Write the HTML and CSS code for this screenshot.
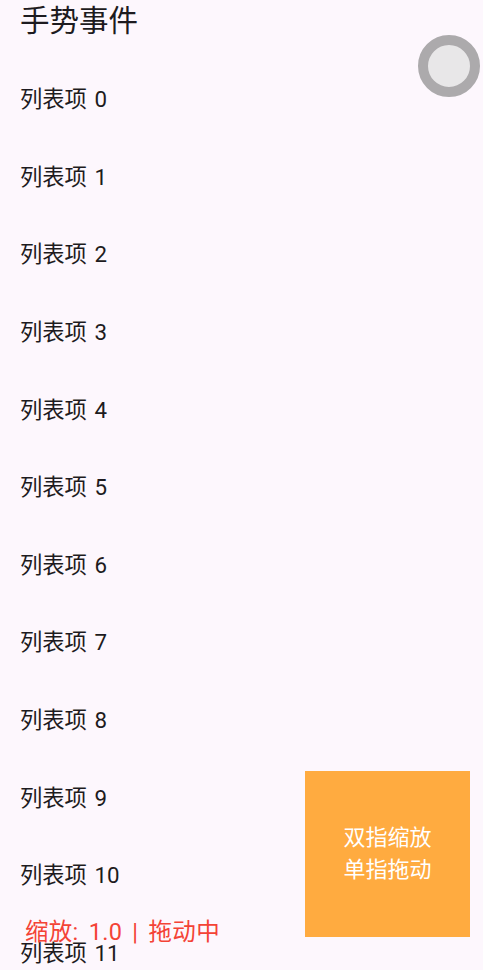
FILE: index.html
```html
<!DOCTYPE html>
<html>
<head>
    <meta charset="utf-8">
    <link rel="stylesheet" href="styles.css">
</head>
<body>
    <div class="page">
        <h1 class="title">手势事件</h1>
        <ul class="list" id="list"></ul>
    </div>

    <div class="knob"></div>

    <div class="gesture-box">
        <span>双指缩放</span>
        <span>单指拖动</span>
    </div>

    <div class="status">缩放: 1.0 | 拖动中</div>

    <script>
        // Build the list items
        const list = document.getElementById("list");
        for (let i = 0; i < 12; i++) {
            const item = document.createElement("li");
            item.className = "list-item";
            item.textContent = "列表项 " + i;
            list.appendChild(item);
        }
    </script>
</body>
</html>
```

FILE: styles.css
```css
/* Gesture demo page */
html, body {
    margin: 0;
    height: 100%;
    overflow: hidden;
}

body {
    font-family: Roboto, "Noto Sans CJK SC", sans-serif;
    background-color: #fdf7fd;
    color: #1d1b20;
    position: relative;
}

.page {
    padding-left: 20px;
}

.title {
    margin: 0;
    font-size: 29.5px;
    font-weight: 400;
    line-height: 42px;
}

.list {
    list-style: none;
    margin: 16.5px 0 0;
    padding: 0;
}

.list-item {
    height: 77.6px;
    display: flex;
    align-items: center;
    font-size: 22.3px;
    word-spacing: 2px;
}

.knob {
    position: absolute;
    left: 418px;
    top: 35px;
    width: 42px;
    height: 42px;
    border: 10px solid #acaaac;
    border-radius: 50%;
    background-color: #e8e7e8;
}

.gesture-box {
    position: absolute;
    left: 305px;
    top: 771px;
    width: 165px;
    height: 166px;
    background-color: #ffab40;
    color: #fff;
    font-size: 22px;
    line-height: 32px;
    display: flex;
    flex-direction: column;
    align-items: center;
    justify-content: center;
}

.status {
    position: absolute;
    left: 25px;
    top: 913px;
    font-size: 23.5px;
    line-height: 38px;
    word-spacing: 4px;
    letter-spacing: 0.3px;
    color: #f44336;
}
```
